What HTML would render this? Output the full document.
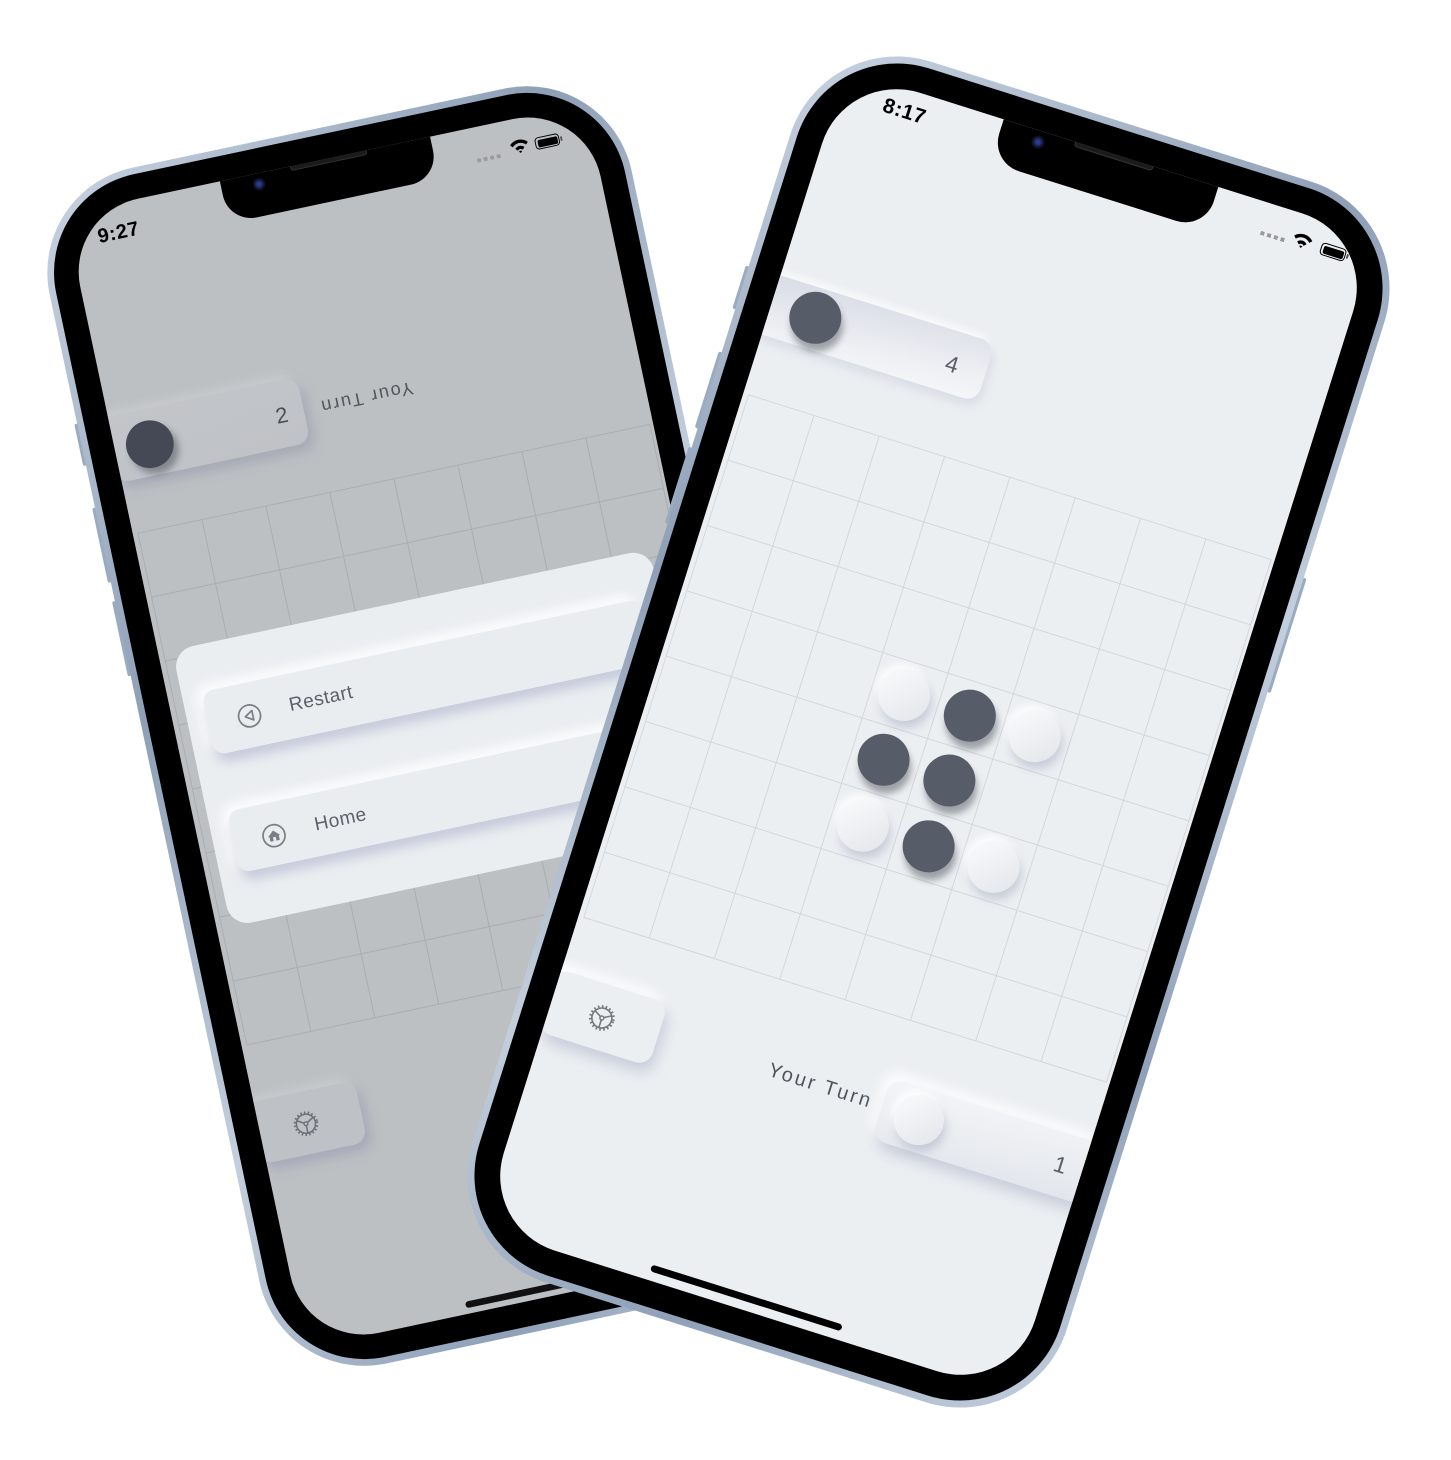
<!DOCTYPE html>
<html><head><meta charset="utf-8"><style>
html,body{margin:0;padding:0;background:#fff;width:1451px;height:1460px;overflow:hidden;font-family:"Liberation Sans",sans-serif}
.phone{position:absolute;width:623px;height:1280px;transform-origin:50% 50%}
.rim{position:absolute;inset:0;border-radius:112px;background:linear-gradient(135deg,#c9d4e2,#8e9fb6 30%,#c3cfdd 55%,#8fa0b7 80%,#c6d1df)}
.black{position:absolute;inset:7px;border-radius:105px;background:#000}
.screen{position:absolute;left:33px;top:33px;width:557px;height:1214px;border-radius:78px;overflow:hidden}
.c{position:absolute;left:-33px;top:-33px;width:623px;height:1280px}
.abs{position:absolute}
.notch{position:absolute;left:199px;top:0;width:225px;height:78px;background:#000;border-radius:0 0 30px 30px}
.grille{position:absolute;left:75px;top:30px;width:80px;height:6px;border-radius:3px;background:#1b1b1b;border:1px solid #333}
.cam{position:absolute;left:33px;top:38px;width:13px;height:13px;border-radius:50%;background:radial-gradient(circle,#2b3a8a 20%,#0d0f22 60%)}
.time{position:absolute;font-size:21px;font-weight:bold;color:#000;letter-spacing:0.5px}
.dots{position:absolute;width:26px;height:4px;background:repeating-linear-gradient(90deg,#9a9a9a 0 4px,transparent 4px 7px)}
.batt{position:absolute;width:26px;height:13px;border:1.5px solid #000;border-radius:4px;box-sizing:border-box;padding:1.5px}
.batt i{display:block;width:100%;height:100%;background:#000;border-radius:2px}
.batt:after{content:"";position:absolute;right:-4px;top:3px;width:2px;height:5px;background:#555;border-radius:1px}
.stoneD{position:absolute;border-radius:50%;background:#575c69;box-shadow:4px 7px 7px rgba(40,44,55,.4)}
.stoneW{position:absolute;border-radius:50%;background:linear-gradient(135deg,#fafbfc,#e2e5ea);box-shadow:4px 6px 9px rgba(170,176,196,.55),-4px -4px 8px rgba(255,255,255,.9)}
.btn{position:absolute;border-radius:14px}
.side{position:absolute;width:4px;background:#9aabc1;border-radius:2px}
</style></head><body>

<!-- LEFT PHONE -->
<div class="phone" style="left:133.5px;top:86px;transform:rotate(-12deg) scale(0.955)">
  <div class="side" style="left:-3px;top:250px;height:45px"></div>
  <div class="side" style="left:-3px;top:340px;height:80px"></div>
  <div class="side" style="left:-3px;top:440px;height:80px"></div>
  <div class="rim"></div><div class="black"></div>
  <div class="screen" style="background:#bdc0c3"><div class="c">
    <div class="abs" style="left:37.5px;top:375px;width:548px;height:548px;border-right:1px solid #a9acb0;border-bottom:1px solid #a9acb0;background-image:linear-gradient(to right,#a9acb0 1px,transparent 1px),linear-gradient(to bottom,#a9acb0 1px,transparent 1px);background-size:68.5px 68.5px"></div>
    <div class="btn" style="left:28px;top:250px;width:207px;height:70px;background:linear-gradient(170deg,#c2c5c9,#bfc2c6);box-shadow:5px 8px 12px rgba(150,155,175,.6),-5px -5px 10px rgba(205,208,211,.8)"></div>
    <div class="stoneD" style="left:44.5px;top:261.5px;width:50px;height:50px;background:#444955"></div>
    <div class="abs" style="left:205px;top:273px;font-size:23px;color:#4a4f5a">2</div>
    <div class="abs" style="left:242px;top:274px;width:120px;text-align:center;font-size:19px;letter-spacing:2px;color:#50555f;transform:rotate(180deg)">Your Turn</div>
    <div class="abs" style="left:48px;top:503px;width:511px;height:296px;border-radius:22px;background:#ebeef1"></div>
    <div class="btn" style="left:69px;top:552px;width:469px;height:68px;border-radius:12px;background:#eaedf0;box-shadow:2px 9px 12px rgba(165,172,200,.55),-6px -6px 12px #fff"></div>
    <svg class="abs" style="left:99px;top:573px" width="28" height="28" viewBox="0 0 28 28"><circle cx="14" cy="14" r="11.5" fill="none" stroke="#7a7e86" stroke-width="1.8"/><path d="M17.5 9 L9.5 14 L17.5 19 Z" fill="none" stroke="#7a7e86" stroke-width="1.8" stroke-linejoin="round"/></svg>
    <div class="abs" style="left:156px;top:574px;font-size:20px;color:#5b606b;letter-spacing:.5px">Restart</div>
    <div class="btn" style="left:69px;top:680px;width:469px;height:66px;border-radius:12px;background:#eaedf0;box-shadow:2px 9px 12px rgba(165,172,200,.55),-6px -6px 12px #fff"></div>
    <svg class="abs" style="left:97.5px;top:701px" width="28" height="28" viewBox="0 0 28 28"><circle cx="14" cy="14" r="11.5" fill="none" stroke="#7a7e86" stroke-width="1.8"/><path d="M7.5 14.5 L14 8.5 L20.5 14.5 L19 14.5 L19 19.5 L9 19.5 L9 14.5 Z" fill="#7a7e86"/><rect x="12.6" y="15.5" width="2.8" height="4" fill="#eaedf0"/></svg>
    <div class="abs" style="left:156px;top:702px;font-size:20px;color:#5b606b;letter-spacing:.5px">Home</div>
    <div class="btn" style="left:26px;top:983px;width:115px;height:66px;background:#bec1c5;box-shadow:5px 8px 12px rgba(150,155,178,.6),-5px -5px 10px rgba(205,208,211,.8)"></div>
    <svg class="abs" style="left:65.5px;top:1001px" width="32" height="32" viewBox="-16 -16 32 32"><circle r="10" fill="none" stroke="#6c7078" stroke-width="1.6"/><circle r="11.6" fill="none" stroke="#6c7078" stroke-width="2.6" stroke-dasharray="1.6 2.3"/><g stroke="#6c7078" stroke-width="1.6"><line x1="0" y1="0" x2="0" y2="10"/><line x1="0" y1="0" x2="-8.7" y2="-5"/><line x1="0" y1="0" x2="8.7" y2="-5"/></g><circle r="2" fill="#bec1c5" stroke="#6c7078" stroke-width="1.4"/></svg>
    <div class="abs" style="left:206px;top:1234px;width:211px;height:7px;border-radius:4px;background:#111"></div>
    <div class="notch"><div class="grille"></div><div class="cam"></div></div>
    <div class="time" style="left:62px;top:52px">9:27</div>
    <div class="dots" style="left:467px;top:66px"></div>
    <svg class="abs" style="left:503px;top:54px" width="21" height="16" viewBox="0 0 21 16"><path d="M1 5.5 A13 13 0 0 1 20 5.5 L17.6 8 A9.6 9.6 0 0 0 3.4 8 Z M5.6 10.2 A6.4 6.4 0 0 1 15.4 10.2 L13 12.6 A3 3 0 0 0 8 12.6 Z M10.5 15.5 L8.8 13.8 A2.4 2.4 0 0 1 12.2 13.8 Z" fill="#000"/></svg>
    <div class="batt" style="left:530px;top:57px"><i></i></div>
  </div></div>
</div>

<!-- RIGHT PHONE -->
<div class="phone" style="left:616.5px;top:92px;transform:rotate(17.5deg)">
  <div class="side" style="left:-3px;top:250px;height:45px"></div>
  <div class="side" style="left:-3px;top:340px;height:80px"></div>
  <div class="side" style="left:-3px;top:440px;height:80px"></div>
  <div class="side" style="left:622px;top:380px;height:120px"></div>
  <div class="rim"></div><div class="black"></div>
  <div class="screen" style="background:#eceff2"><div class="c">
    <div class="abs" style="left:37.5px;top:372px;width:548px;height:548px;border-right:1px solid #d3d6db;border-bottom:1px solid #d3d6db;background-image:linear-gradient(to right,#d3d6db 1px,transparent 1px),linear-gradient(to bottom,#d3d6db 1px,transparent 1px);background-size:68.5px 68.5px"></div>
    <div class="stoneW" style="left:251.25px;top:585.75px;width:52px;height:52px"></div>
    <div class="stoneD" style="left:319.75px;top:585.75px;width:52px;height:52px"></div>
    <div class="stoneW" style="left:388.25px;top:585.75px;width:52px;height:52px"></div>
    <div class="stoneD" style="left:251.25px;top:654.25px;width:52px;height:52px"></div>
    <div class="stoneD" style="left:319.75px;top:654.25px;width:52px;height:52px"></div>
    <div class="stoneW" style="left:251.25px;top:722.75px;width:52px;height:52px"></div>
    <div class="stoneD" style="left:319.75px;top:722.75px;width:52px;height:52px"></div>
    <div class="stoneW" style="left:388.25px;top:722.75px;width:52px;height:52px"></div>
    <div class="btn" style="left:20px;top:249px;width:238px;height:62px;background:linear-gradient(175deg,#d8dce5,#eef0f4 70%,#f4f6f8);box-shadow:4px 6px 10px rgba(180,186,205,.35),-4px -4px 8px rgba(255,255,255,.8)"></div>
    <div class="stoneD" style="left:53px;top:253px;width:52px;height:52px"></div>
    <div class="abs" style="left:217px;top:269px;font-size:23px;color:#595e6a">4</div>
    <div class="btn" style="left:28px;top:977px;width:117px;height:66px;background:#eceff2;box-shadow:5px 8px 14px rgba(170,176,200,.55),-6px -6px 12px #fff"></div>
    <svg class="abs" style="left:70px;top:995px" width="32" height="32" viewBox="-16 -16 32 32"><circle r="10" fill="none" stroke="#75797f" stroke-width="1.6"/><circle r="11.6" fill="none" stroke="#75797f" stroke-width="2.6" stroke-dasharray="1.6 2.3"/><g stroke="#75797f" stroke-width="1.6"><line x1="0" y1="0" x2="0" y2="10"/><line x1="0" y1="0" x2="-8.7" y2="-5"/><line x1="0" y1="0" x2="8.7" y2="-5"/></g><circle r="2" fill="#eceff2" stroke="#75797f" stroke-width="1.4"/></svg>
    <div class="abs" style="left:235px;top:999px;width:160px;text-align:center;font-size:20px;letter-spacing:2.5px;color:#50555f">Your Turn</div>
    <div class="btn" style="left:380px;top:981px;width:222px;height:64px;background:linear-gradient(175deg,#f3f5f8,#e9ecf0 60%,#e2e5ec);box-shadow:5px 8px 14px rgba(170,176,200,.55),-6px -6px 12px #fff"></div>
    <div class="stoneW" style="left:394px;top:988px;width:50px;height:50px"></div>
    <div class="abs" style="left:561px;top:1000px;font-size:23px;color:#595e6a">1</div>
    <div class="abs" style="left:208px;top:1231px;width:200px;height:7px;border-radius:4px;background:#000"></div>
    <div class="notch"><div class="grille"></div><div class="cam"></div></div>
    <div class="time" style="left:80px;top:44px">8:17</div>
    <div class="dots" style="left:478px;top:62px"></div>
    <svg class="abs" style="left:510px;top:51px" width="21" height="16" viewBox="0 0 21 16"><path d="M1 5.5 A13 13 0 0 1 20 5.5 L17.6 8 A9.6 9.6 0 0 0 3.4 8 Z M5.6 10.2 A6.4 6.4 0 0 1 15.4 10.2 L13 12.6 A3 3 0 0 0 8 12.6 Z M10.5 15.5 L8.8 13.8 A2.4 2.4 0 0 1 12.2 13.8 Z" fill="#000"/></svg>
    <div class="batt" style="left:540px;top:54px"><i></i></div>
  </div></div>
</div>
</body></html>
